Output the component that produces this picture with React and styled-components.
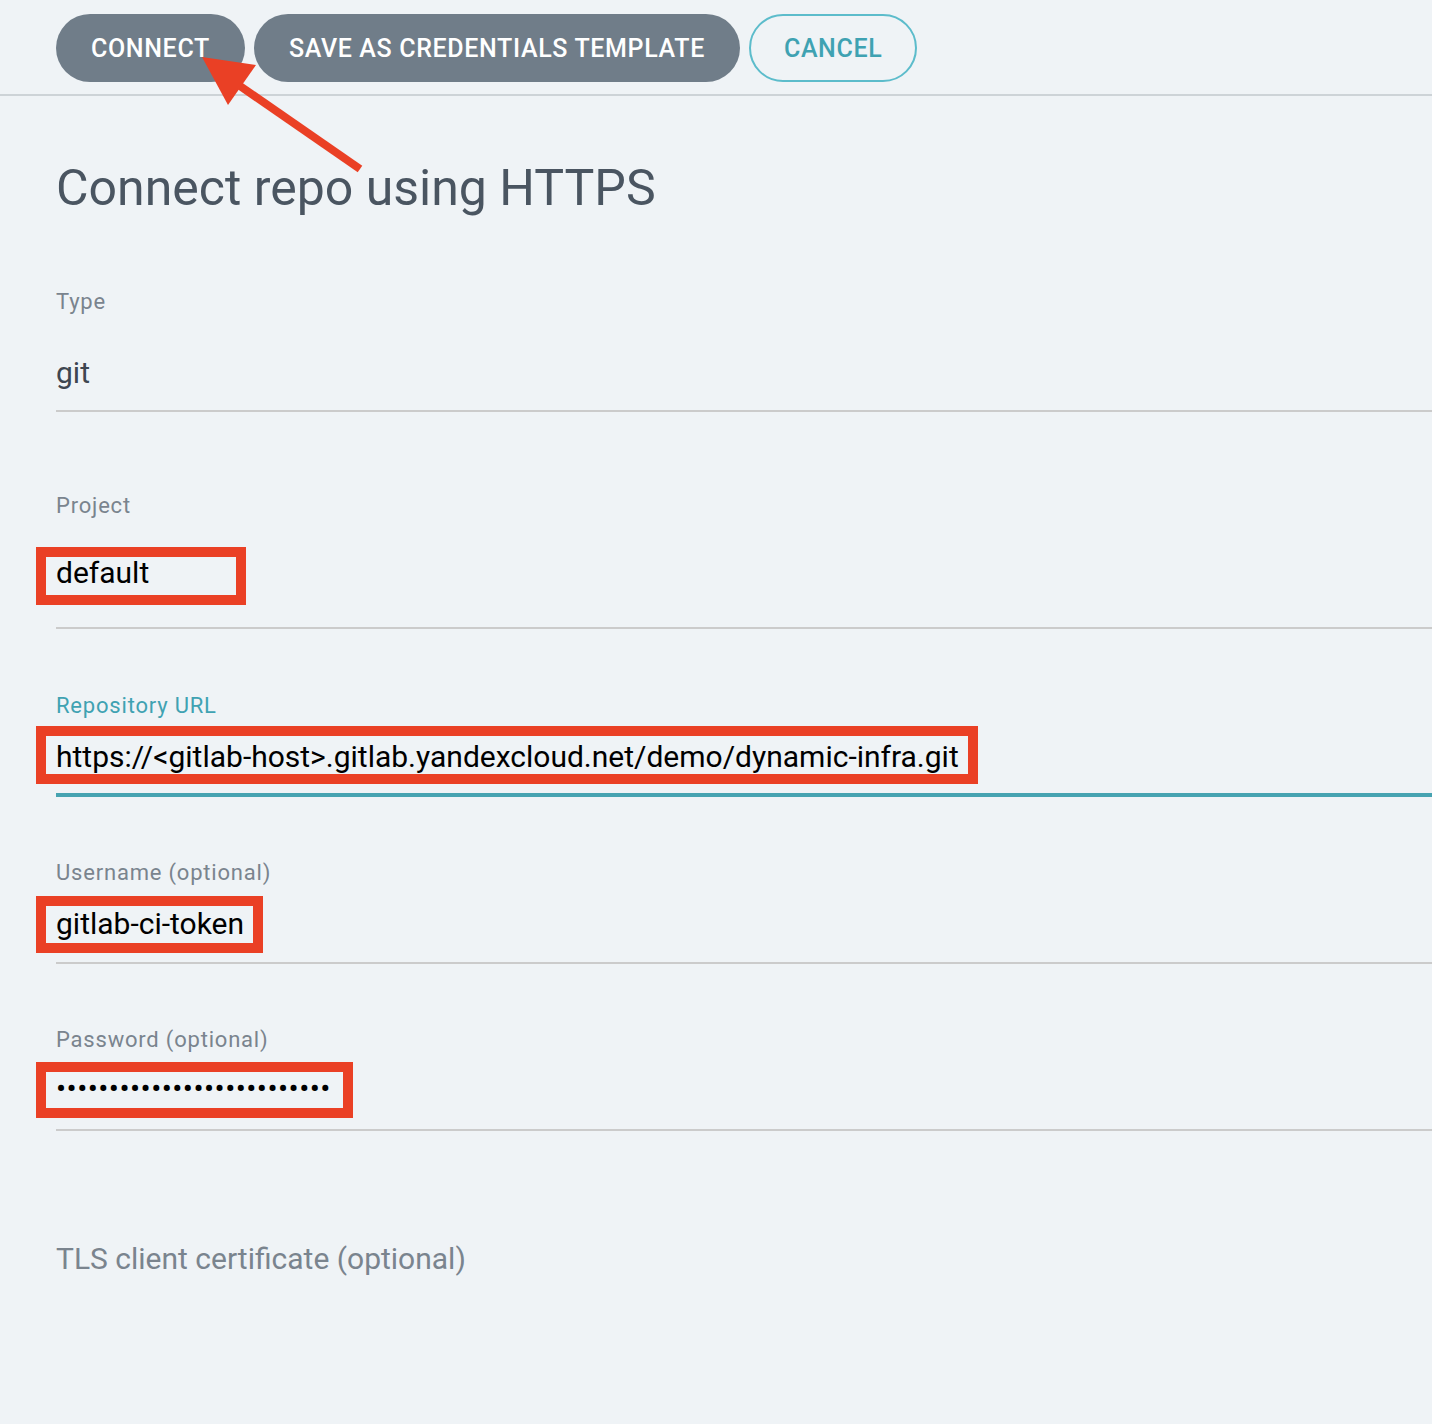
import React from 'react';
import styled, { createGlobalStyle } from 'styled-components';

const Global = createGlobalStyle`
  html, body {
    margin: 0;
    padding: 0;
    background: #eff3f6;
  }
  body {
    font-family: Roboto, "Liberation Sans", sans-serif;
    overflow: hidden;
  }
`;

const fields = [
  { label: 'Type', value: 'git', muted: true, top: 74, gap: 43, pad: 21 },
  { label: 'Project', value: 'default', top: 82, gap: 39, pad: 38, mark: { left: -20, top: -10, width: 210, height: 58 } },
  { label: 'Repository URL', value: 'https://<gitlab-host>.gitlab.yandexcloud.net/demo/dynamic-infra.git', focused: true, top: 65, gap: 23, pad: 21, mark: { left: -20, top: -15, width: 942, height: 58 } },
  { label: 'Username (optional)', value: 'gitlab-ci-token', top: 64, gap: 23, pad: 22, mark: { left: -20, top: -12, width: 227, height: 57 } },
  { label: 'Password (optional)', value: '••••••••••••••••••••••••••', password: true, top: 64, gap: 21, pad: 24, mark: { left: -20, top: -11, width: 317, height: 56 } },
];

const App = () => {
  return (
    <Page>
      <Global />
      <Toolbar>
        <PillButton>CONNECT</PillButton>
        <PillButton>SAVE AS CREDENTIALS TEMPLATE</PillButton>
        <PillButton outline>CANCEL</PillButton>
      </Toolbar>
      <Arrow viewBox="0 0 200 150" width="200" height="150">
        <line x1="160" y1="113" x2="40" y2="30" stroke="#ea4025" strokeWidth="8" />
        <polygon points="2,1 28,49 56,9" fill="#ea4025" />
      </Arrow>
      <Form>
        <Heading>Connect repo using HTTPS</Heading>
        {fields.map((f) => (
          <Field key={f.label} top={f.top}>
            <Label focused={f.focused}>{f.label}</Label>
            <InputLine focused={f.focused} gap={f.gap} pad={f.pad}>
              <Value muted={f.muted} password={f.password}>
                {f.value}
                {f.mark && (
                  <Marker
                    style={{
                      left: f.mark.left,
                      top: f.mark.top,
                      width: f.mark.width,
                      height: f.mark.height,
                    }}
                  />
                )}
              </Value>
            </InputLine>
          </Field>
        ))}
        <SectionTitle>TLS client certificate (optional)</SectionTitle>
      </Form>
    </Page>
  );
};

export default App;

// -----------STYLED COMPONENTS---------

const Page = styled.div`
  position: relative;
  min-height: 1424px;
  background: #eff3f6;
`;

const Toolbar = styled.div`
  display: flex;
  gap: 9px;
  padding: 14px 56px 12px;
  border-bottom: 2px solid #cdd3d7;
`;

const PillButton = styled.button`
  height: 68px;
  padding: 0 ${(p) => (p.outline ? '33px' : '35px')};
  border-radius: 34px;
  border: ${(p) => (p.outline ? '2px solid #5cbccb' : 'none')};
  background: ${(p) => (p.outline ? 'transparent' : '#707d89')};
  color: ${(p) => (p.outline ? '#3fa2b2' : '#ffffff')};
  font-family: Roboto, "Liberation Sans", sans-serif;
  font-size: 25px;
  font-weight: 500;
  letter-spacing: 0.65px;
  cursor: pointer;
`;

const Arrow = styled.svg`
  position: absolute;
  left: 200px;
  top: 56px;
  overflow: visible;
`;

const Form = styled.div`
  display: flex;
  flex-direction: column;
  padding-left: 56px;
`;

const Heading = styled.h1`
  margin: 64px 0 0;
  font-size: 50px;
  line-height: 56px;
  font-weight: 400;
  color: #4a5561;
`;

const Field = styled.div`
  display: flex;
  flex-direction: column;
  margin-top: ${(p) => p.top}px;
`;

const Label = styled.div`
  font-size: 22px;
  line-height: 24px;
  letter-spacing: 0.8px;
  color: ${(p) => (p.focused ? '#3fa2b2' : '#7a848e')};
`;

const InputLine = styled.div`
  padding-top: ${(p) => p.gap}px;
  padding-bottom: ${(p) => (p.focused ? p.pad - 1 : p.pad)}px;
  border-bottom: ${(p) => (p.focused ? '4px solid #46a3b1' : '2px solid #cbcbcb')};
`;

const Value = styled.span`
  position: relative;
  display: inline-block;
  font-size: 30px;
  line-height: 32px;
  color: ${(p) => (p.muted ? '#3e4650' : '#000000')};
  letter-spacing: ${(p) => (p.password ? '0.45px' : '0')};
`;

const Marker = styled.span`
  position: absolute;
  border: 10px solid #ea4025;
  box-sizing: border-box;
  pointer-events: none;
`;

const SectionTitle = styled.div`
  margin-top: 112px;
  font-size: 30px;
  line-height: 32px;
  color: #7a848e;
`;
